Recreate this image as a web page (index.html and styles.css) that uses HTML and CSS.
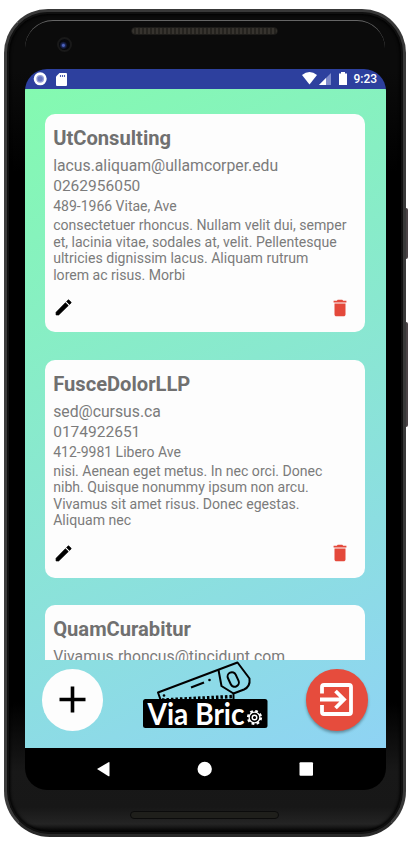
FILE: index.html
```html
<!DOCTYPE html>
<html lang="en">
<head>
<meta charset="utf-8">
<title>Via Brico</title>
<link rel="stylesheet" href="styles.css">
</head>
<body>
<div class="device">
  <i class="side-button power"></i>
  <i class="side-button volume"></i>
  <div class="shell">
    <div class="top-bezel"><i class="camera"></i><i class="speaker"></i></div>
    <div class="screen">
      <header class="status">
        <svg class="status-left" width="31" height="20" viewBox="0 0 31 20">
          <circle cx="15.200" cy="9.800" r="5.200" fill="#98a2d8" stroke="#fff" stroke-width="2.600"/>
          <circle cx="15.200" cy="9.800" r="2.600" fill="#6673c1"/>
        </svg>
        <svg class="sd" width="11" height="13" viewBox="0 0 11 13"><path d="M3.500 0H10q1 0 1 1v11q0 1-1 1H1q-1 0-1-1V3.500z" fill="#fff"/><path d="M4.500 2v2M6.500 2v2M8.500 2v2" stroke="#4d5db0" stroke-width="1.100"/></svg>
        <svg class="signals" width="48" height="20" viewBox="0 0 48 20">
          <path d="M0 6Q7.500 0 15 6L7.500 15.500Z" fill="#fff"/>
          <path d="M29 4v12H17z" fill="#7f8bcb"/><path d="M24 9v7h-7z" fill="#fff"/>
          <path d="M39 3h4v1.500h2v11.500h-8V4.500h2z" fill="#fff"/>
        </svg>
        <span class="time">9:23</span>
      </header>
      <main class="app">
        <section class="list">
          <article class="card">
            <h2>UtConsulting</h2>
            <p class="mail">lacus.aliquam@ullamcorper.edu</p>
            <p class="phone">0262956050</p>
            <p class="address">489-1966 Vitae, Ave</p>
            <p class="note">consectetuer rhoncus. Nullam velit dui, semper<br>et, lacinia vitae, sodales at, velit. Pellentesque<br>ultricies dignissim lacus. Aliquam rutrum<br>lorem ac risus. Morbi</p>
            <div class="actions">
              <svg class="pencil" width="21" height="21" viewBox="0 0 24 24"><path d="M3.500 17.500V20.500h3L17.500 9.800l-3.300-3.300zM20.400 7a1 1 0 0 0 0-1.400l-2-2a1 1 0 0 0-1.400 0l-1.500 1.500 3.400 3.400z"/></svg>
              <svg class="trash" width="22" height="22" viewBox="0 0 24 24"><path d="M6 19c0 1.100.9 2 2 2h8c1.100 0 2-.9 2-2V7H6zM19 4h-3.500l-1-1h-5l-1 1H5v2h14z"/></svg>
            </div>
          </article>
          <article class="card">
            <h2>FusceDolorLLP</h2>
            <p class="mail">sed@cursus.ca</p>
            <p class="phone">0174922651</p>
            <p class="address">412-9981 Libero Ave</p>
            <p class="note">nisi. Aenean eget metus. In nec orci. Donec<br>nibh. Quisque nonummy ipsum non arcu.<br>Vivamus sit amet risus. Donec egestas.<br>Aliquam nec</p>
            <div class="actions">
              <svg class="pencil" width="21" height="21" viewBox="0 0 24 24"><path d="M3.500 17.500V20.500h3L17.500 9.800l-3.300-3.300zM20.400 7a1 1 0 0 0 0-1.400l-2-2a1 1 0 0 0-1.400 0l-1.500 1.500 3.400 3.400z"/></svg>
              <svg class="trash" width="22" height="22" viewBox="0 0 24 24"><path d="M6 19c0 1.100.9 2 2 2h8c1.100 0 2-.9 2-2V7H6zM19 4h-3.500l-1-1h-5l-1 1H5v2h14z"/></svg>
            </div>
          </article>
          <article class="card">
            <h2>QuamCurabitur</h2>
            <p class="mail">Vivamus.rhoncus@tincidunt.com</p>
          </article>
        </section>
        <footer class="bottom">
          <button class="fab add" aria-label="Add"><svg width="61" height="61" viewBox="0 0 61 61"><path d="M30.500 17.500v26M17.500 30.500h26" stroke="#000" stroke-width="3.600"/></svg></button>
          <svg class="logo" width="126" height="70" viewBox="0 0 126 70">
            <rect x="1" y="39" width="124.500" height="29" rx="2.500"/>
            <g fill="none" stroke="#000" stroke-width="2" stroke-linejoin="round">
              <path d="M19 41L16 32.500L95.500 2.500L107.500 18.500Q108.500 26.500 102 29.500L91.500 33.500V40"/>
              <path d="M76.500 10L79.500 26L91.500 33.500"/>
              <rect x="87" y="12" width="8.500" height="15" rx="4.200" transform="rotate(-25 91.200 19.500)"/>
              <path d="M49 27.500L62 22.500"/>
              <path d="M20 40L91 36.500" stroke-dasharray="2.500 2" stroke-width="3.500"/>
            </g>
            <circle cx="22" cy="35.500" r="1.300"/><circle cx="67.500" cy="20" r="1.300"/>
            <text x="5.500" y="64.500" textLength="97" lengthAdjust="spacingAndGlyphs">Via Bric</text>
            <circle cx="112.500" cy="57.500" r="6.500" fill="none" stroke="#fff" stroke-width="2.200" stroke-dasharray="2.700 2.400"/>
            <circle cx="112.500" cy="57.500" r="5.400" fill="none" stroke="#fff" stroke-width="1.300"/>
            <circle cx="112.500" cy="57.500" r="2.300" fill="none" stroke="#fff" stroke-width="1.400"/>
          </svg>
          <button class="fab exit" aria-label="Exit"><svg width="61" height="61" viewBox="0 0 61 61"><g fill="none" stroke="#fff" stroke-width="3.800"><path d="M16 24.500V18q0-2 2-2h25q2 0 2 2v25q0 2-2 2H18q-2 0-2-2v-7M14 30.500h22M29.500 22l8.500 8.500-8.500 8.500"/></g></svg></button>
        </footer>
      </main>
      <nav class="navigation">
        <svg width="361" height="42" viewBox="0 0 361 42" fill="#fff"><path d="M72 21L83.500 14.200q1-.4 1 .6v12.900q0 1-1 .5z"/><circle cx="179.700" cy="21" r="7.200"/><rect x="274.500" y="14.200" width="13.500" height="13.500" rx="1"/></svg>
      </nav>
    </div>
    <div class="bottom-bezel"><i class="speaker"></i></div>
  </div>
</div>
</body>
</html>
```
FILE: styles.css
```css
* { box-sizing: border-box; }
body { margin: 0; background: #fff; font-family: Roboto, sans-serif; overflow: hidden; }
h2, p { margin: 0; white-space: nowrap; }
.device { position: relative; width: 413px; height: 842px; padding: 9px 7px 5px 4px; }
.shell {
  position: relative;
  height: 828px;
  border: 3px solid #383838;
  border-left-color: #3c3c3c;
  border-bottom-color: #292929;
  border-radius: 44px 44px 46px 46px;
  background: linear-gradient(#0b0b0b, #0b0b0b 60px, #000 160px, #000 690px, #181818 760px, #171717 795px, #242424 812px, #020202 820px);
  box-shadow: inset 0 0 0 2px #101010, inset 0 0 3px 3px #000;
  padding: 57px 0 0 17.500px;
}
.side-button { position: absolute; left: 405px; width: 3px; background: #4a4346; border-radius: 0 2px 2px 0; }
.power { top: 208px; height: 51px; }
.volume { top: 322px; height: 105px; }
.top-bezel { position: absolute; top: 8px; left: 18px; right: 18px; height: 45px; border-top: 1.500px solid #666; border-radius: 28px 28px 0 0; }
.top-bezel .speaker { position: absolute; left: 106px; top: 6px; width: 147px; height: 8px; border-radius: 5px; border: 1px solid #1c1b19; background: repeating-linear-gradient(90deg, #36332e 0 2px, #25231f 2px 4px); }
.camera { position: absolute; left: 32px; top: 16px; width: 15px; height: 15px; border-radius: 50%; border: 2px solid #191919; background: radial-gradient(circle at 40% 58%, #4b62bd 0 1px, #1d285c 2px, #07080d 4px); }
.screen { position: relative; width: 361px; height: 721px; border-radius: 22px; overflow: hidden; background: #000; }
.status { display: flex; height: 20px; background: #2d409e; color: #fff; }
.status-left { flex: none; }
.sd { margin-top: 4px; flex: none; }
.signals { margin: 0 0 0 235.500px; flex: none; }
.time { margin-left: 3.500px; font-size: 12px; line-height: 21px; font-weight: 500; }
.app { height: 659px; background: linear-gradient(153deg, #84fab0, #8fd3f4); display: flex; flex-direction: column; }
.list { height: 571px; padding: 25px 21px 0 20px; display: flex; flex-direction: column; gap: 27.300px; overflow: hidden; }
.card { flex: none; height: 218.300px; padding: 12px 9px 0 8.700px; border-radius: 10px; background: #fdfdfd; color: #7b7b7b; }
.card h2 { font-size: 20.150px; line-height: 24px; height: 29px; color: #707070; }
.mail { font-size: 15.760px; line-height: 21px; }
.phone { font-size: 15.500px; line-height: 21px; }
.address { font-size: 14px; line-height: 19px; margin-bottom: 1px; }
.note { font-size: 14.080px; line-height: 16.500px; }
.actions { display: flex; justify-content: space-between; align-items: center; margin: 13.500px 4.500px 0 -.5px; }
.pencil { stroke: #000; stroke-width: .8; stroke-linejoin: round; }
.trash { fill: #e4493b; }
.bottom { display: flex; height: 88px; padding: 9px 17px 0 17px; }
.fab { width: 61.500px; height: 61.500px; padding: 0; border: 0; border-radius: 50%; display: flex; flex: none; }
.add { background: #fdfdfd; }
.exit { background: #e64c3d; margin-left: 38px; box-shadow: 0 2px 3px #0005; }
.logo { margin: -9px 0 0 39px; flex: none; }
.logo text { font: 700 30px Lato, sans-serif; fill: #fff; }
.navigation { height: 42px; }
.bottom-bezel .speaker { position: absolute; left: 123px; top: 799px; width: 149px; height: 8px; border-radius: 5px; background: #1f1f1b; border: 1.500px solid #0b0b0b; }
```
